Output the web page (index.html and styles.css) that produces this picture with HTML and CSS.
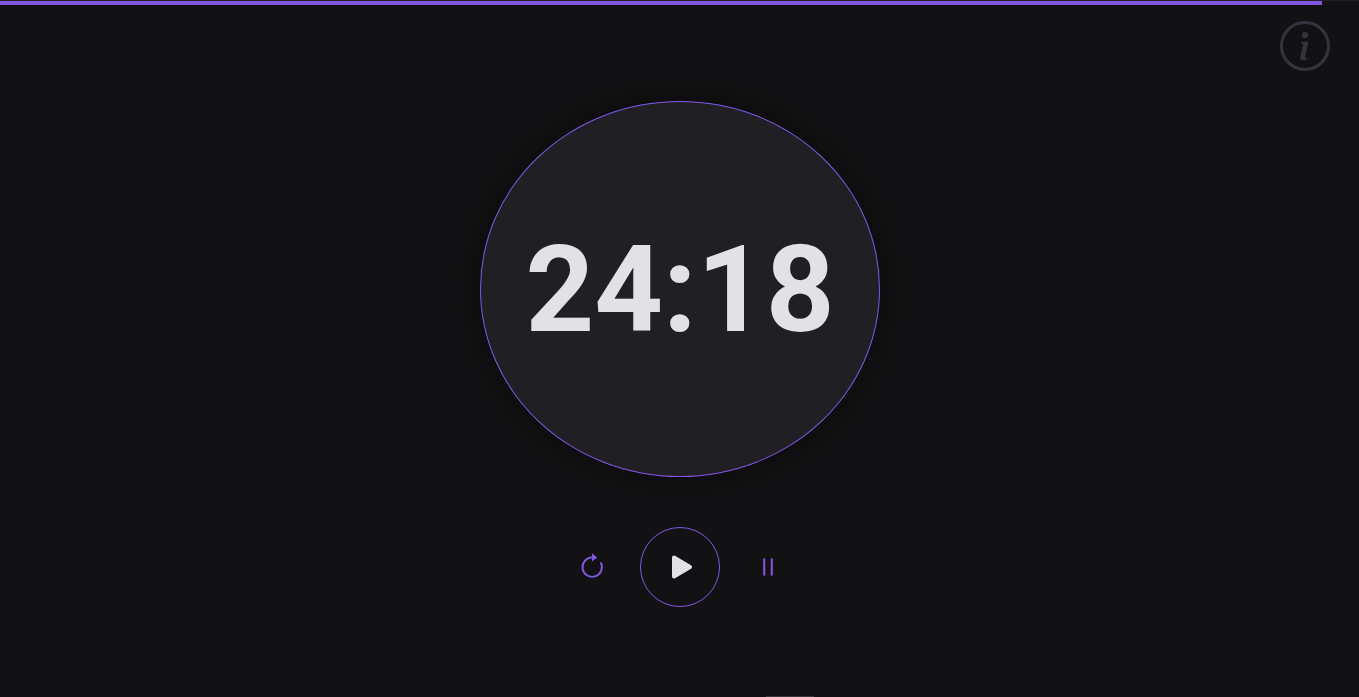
FILE: index.html
```html
<!DOCTYPE html>
<html lang="en">
<head>
<meta charset="utf-8">
<title>24:18</title>
<link rel="stylesheet" href="styles.css">
</head>
<body>
<div class="progress"><div class="progress-bar" style="width:1322px"></div></div>
<button class="info" aria-label="Info">
  <svg width="50" height="50" viewBox="0 0 50 50">
    <circle cx="25" cy="25" r="23.5" fill="none" stroke="currentColor" stroke-width="3"/>
    <circle cx="25" cy="14" r="3.1" fill="currentColor"/>
    <path fill="currentColor" d="M21 21 28.5 20.6 25.2 35.2Q24.8 37.2 25.8 37.2 26.7 37.2 27.8 36.3L28 37.3Q25.8 39.3 23.2 39.3 19.6 39.3 20.4 35.6L23.2 23.6Q23.4 22.3 20.8 22.1Z"/>
  </svg>
</button>
<main class="timer">
  <div class="dial">24:18</div>
  <div class="controls">
    <button class="control" aria-label="Restart">
      <svg width="24" height="26" viewBox="0 0 24 26">
        <path d="M12.5 3.4A9.7 9.7 0 1 0 21 9" fill="none" stroke="currentColor" stroke-width="1.9" stroke-linecap="round"/>
        <path d="M12-.7 17.2 3.5 12 7.5Z" fill="currentColor"/>
      </svg>
    </button>
    <button class="control play" aria-label="Start">
      <svg width="22" height="24" viewBox="0 0 22 24">
        <path d="M3 2.5 19 12 3 21.5Z" fill="currentColor" stroke="currentColor" stroke-width="4" stroke-linejoin="round"/>
      </svg>
    </button>
    <button class="control" aria-label="Pause">
      <svg width="24" height="26" viewBox="0 0 24 26">
        <path d="M8.2 5.2V20.8M15.8 5.2V20.8" fill="none" stroke="currentColor" stroke-width="2" stroke-linecap="round"/>
      </svg>
    </button>
  </div>
</main>
<div class="bottom-tab"></div>
</body>
</html>
```
FILE: styles.css
```css
* { box-sizing: border-box; }
body {
  margin: 0;
  height: 100vh;
  overflow: hidden;
  background: #121214;
  color: #e1e1e6;
  font-family: Roboto, sans-serif;
}
button {
  padding: 0;
  border: 0;
  background: none;
  color: #8257e5;
}
svg { display: block; overflow: visible; }
.progress {
  height: 5px;
  border-top: 1px solid #202024;
}
.progress-bar {
  height: 4px;
  background: #8257e5;
}
.info {
  position: absolute;
  top: 21px;
  right: 29px;
  color: #34343c;
}
.timer {
  display: flex;
  flex-direction: column;
  align-items: center;
  gap: 50px;
  width: 1360px;
  padding-top: 96px;
}
.dial {
  display: flex;
  align-items: center;
  justify-content: center;
  width: 400px;
  height: 376px;
  padding-top: 2px;
  border: 1px solid #8257e5;
  border-radius: 50%;
  background: #202024;
  box-shadow: 0 0 30px rgba(0, 0, 0, .5);
  font-size: 120px;
  font-weight: 700;
  line-height: 1;
}
.controls {
  display: flex;
  align-items: center;
  gap: 36px;
}
.control {
  display: flex;
  align-items: center;
  justify-content: center;
}
.play {
  width: 80px;
  height: 80px;
  padding-left: 4px;
  border: 1px solid #8257e5;
  border-radius: 50%;
  color: #e1e1e6;
}
.bottom-tab {
  position: absolute;
  bottom: 0;
  left: 766px;
  width: 48px;
  height: 1px;
  background: #37373b;
}
```
